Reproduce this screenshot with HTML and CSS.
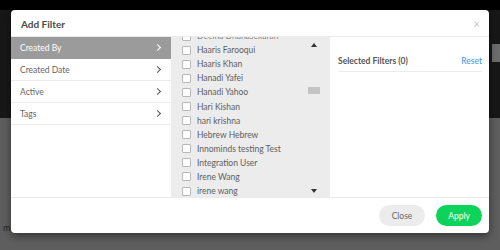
FILE: index.html
```html
<!DOCTYPE html>
<html lang="en">
<head>
    <meta charset="UTF-8">
    <title>Add Filter</title>
    <link rel="stylesheet" href="styles.css">
</head>
<body>
    <div class="page-behind">
        <div class="behind-tab"></div>
        <div class="behind-m">m</div>
    </div>

    <div class="modal">
        <div class="modal-header">
            <div class="modal-title">Add Filter</div>
            <div class="modal-close">&times;</div>
        </div>

        <div class="modal-body">
            <ul class="filter-nav">
                <li class="active">Created By <span class="chev"></span></li>
                <li>Created Date <span class="chev"></span></li>
                <li>Active <span class="chev"></span></li>
                <li>Tags <span class="chev"></span></li>
            </ul>

            <div class="option-list">
                <ul class="options">
                    <li class="cut"><span class="box"></span>Deelna Dhanasekaran</li>
                    <li><span class="box"></span>Haaris Farooqui</li>
                    <li><span class="box"></span>Haaris Khan</li>
                    <li><span class="box"></span>Hanadi Yafei</li>
                    <li><span class="box"></span>Hanadi Yahoo</li>
                    <li><span class="box"></span>Hari Kishan</li>
                    <li><span class="box"></span>hari krishna</li>
                    <li><span class="box"></span>Hebrew Hebrew</li>
                    <li><span class="box"></span>Innominds testing Test</li>
                    <li><span class="box"></span>Integration User</li>
                    <li><span class="box"></span>Irene Wang</li>
                    <li><span class="box"></span>irene wang</li>
                </ul>
                <div class="scrollbar">
                    <span class="arrow-up"></span>
                    <span class="thumb"></span>
                    <span class="arrow-down"></span>
                </div>
            </div>

            <div class="selected">
                <div class="selected-head">
                    <span class="selected-title">Selected Filters (0)</span>
                    <a class="reset" href="#">Reset</a>
                </div>
            </div>
        </div>

        <div class="modal-footer">
            <button class="btn btn-close">Close</button>
            <button class="btn btn-apply">Apply</button>
        </div>
    </div>
</body>
</html>
```

FILE: styles.css
```css
body {
    margin: 0;
    width: 500px;
    height: 250px;
    overflow: hidden;
    font-family: Lato, 'Open Sans', Arial, sans-serif;
    background: linear-gradient(#000 0, #000 10px, #171717 10px, #171717 118px, #5e5e5e 118px);
    position: relative;
}
.page-behind {
    height: 250px;
    position: relative;
}
.behind-tab {
    position: absolute;
    left: 492px;
    top: 44px;
    width: 8px;
    height: 18px;
    background: #6c6c6c;
}
.behind-m {
    position: absolute;
    left: 3px;
    top: 222px;
    font-size: 9px;
    color: #222;
}
.modal {
    position: absolute;
    left: 11px;
    top: 10px;
    width: 478px;
    height: 223px;
    background: #fff;
    border-radius: 4px;
    box-shadow: 0 3px 8px rgba(0,0,0,0.45);
    display: flex;
    flex-direction: column;
    overflow: hidden;
}
.modal-header {
    height: 26px;
    flex: none;
    display: flex;
    align-items: center;
    justify-content: space-between;
    padding: 0 9px 0 10px;
    border-bottom: 1px solid #ebebeb;
}
.modal-title {
    font-size: 10px;
    font-weight: bold;
    color: #4a4a4a;
    margin-top: 1px;
}
.modal-close {
    font-size: 11px;
    color: #c4c4c4;
}
.modal-body {
    flex: 1;
    display: flex;
    min-height: 0;
    border-bottom: 1px solid #ebebeb;
}
.filter-nav {
    list-style: none;
    margin: 0;
    padding: 0;
    width: 160px;
    flex: none;
}
.filter-nav li {
    height: 21px;
    display: flex;
    align-items: center;
    justify-content: space-between;
    padding: 0 9px 0 9px;
    font-size: 8.5px;
    color: #666;
    border-bottom: 1px solid #ececec;
}
.filter-nav li.active {
    background: #9b9b9b;
    color: #fff;
    border-bottom-color: #9b9b9b;
}
.chev {
    width: 4px;
    height: 4px;
    border-right: 1.5px solid #555;
    border-top: 1.5px solid #555;
    transform: rotate(45deg);
    margin-right: 2px;
}
.filter-nav li.active .chev {
    border-color: #fff;
}
.option-list {
    width: 159px;
    flex: none;
    background: #ececec;
    display: flex;
    overflow: hidden;
}
.options {
    list-style: none;
    margin: -8px 0 0 0;
    padding: 0 0 0 11px;
    flex: 1;
}
.options li {
    height: 14.1px;
    display: flex;
    align-items: center;
    font-size: 8.5px;
    color: #606060;
    white-space: nowrap;
}
.options li.cut {
    color: #888;
}
.box {
    width: 7px;
    height: 7px;
    border: 1px solid #b8b8b8;
    border-radius: 1px;
    background: #fff;
    margin-right: 6px;
    flex: none;
}
.scrollbar {
    width: 15px;
    margin-right: 9px;
    display: flex;
    flex-direction: column;
    align-items: center;
    padding: 6px 0 4px;
    box-sizing: border-box;
}
.arrow-up {
    width: 0;
    height: 0;
    border-left: 3.5px solid transparent;
    border-right: 3.5px solid transparent;
    border-bottom: 4px solid #333;
}
.thumb {
    width: 12px;
    height: 7px;
    background: #c4c4c4;
    margin-top: 40px;
}
.arrow-down {
    width: 0;
    height: 0;
    margin-top: auto;
    border-left: 3.5px solid transparent;
    border-right: 3.5px solid transparent;
    border-top: 4px solid #333;
}
.selected {
    flex: 1;
    padding: 0 7px 0 8px;
}
.selected-head {
    margin-top: 14px;
    height: 20px;
    display: flex;
    justify-content: space-between;
    align-items: center;
    border-bottom: 1px solid #ececec;
}
.selected-title {
    font-size: 8.5px;
    font-weight: bold;
    color: #555;
}
.reset {
    font-size: 8.5px;
    color: #3d8fe6;
    text-decoration: none;
}
.modal-footer {
    height: 35px;
    flex: none;
    display: flex;
    justify-content: flex-end;
    align-items: center;
    gap: 11px;
    padding: 0 7px;
}
.btn {
    height: 21px;
    width: 46px;
    border: none;
    border-radius: 11px;
    font-family: inherit;
    font-size: 8.5px;
    padding: 0;
}
.btn-close {
    background: #ececec;
    color: #666;
}
.btn-apply {
    background: #0ed35a;
    color: #fff;
}
```
